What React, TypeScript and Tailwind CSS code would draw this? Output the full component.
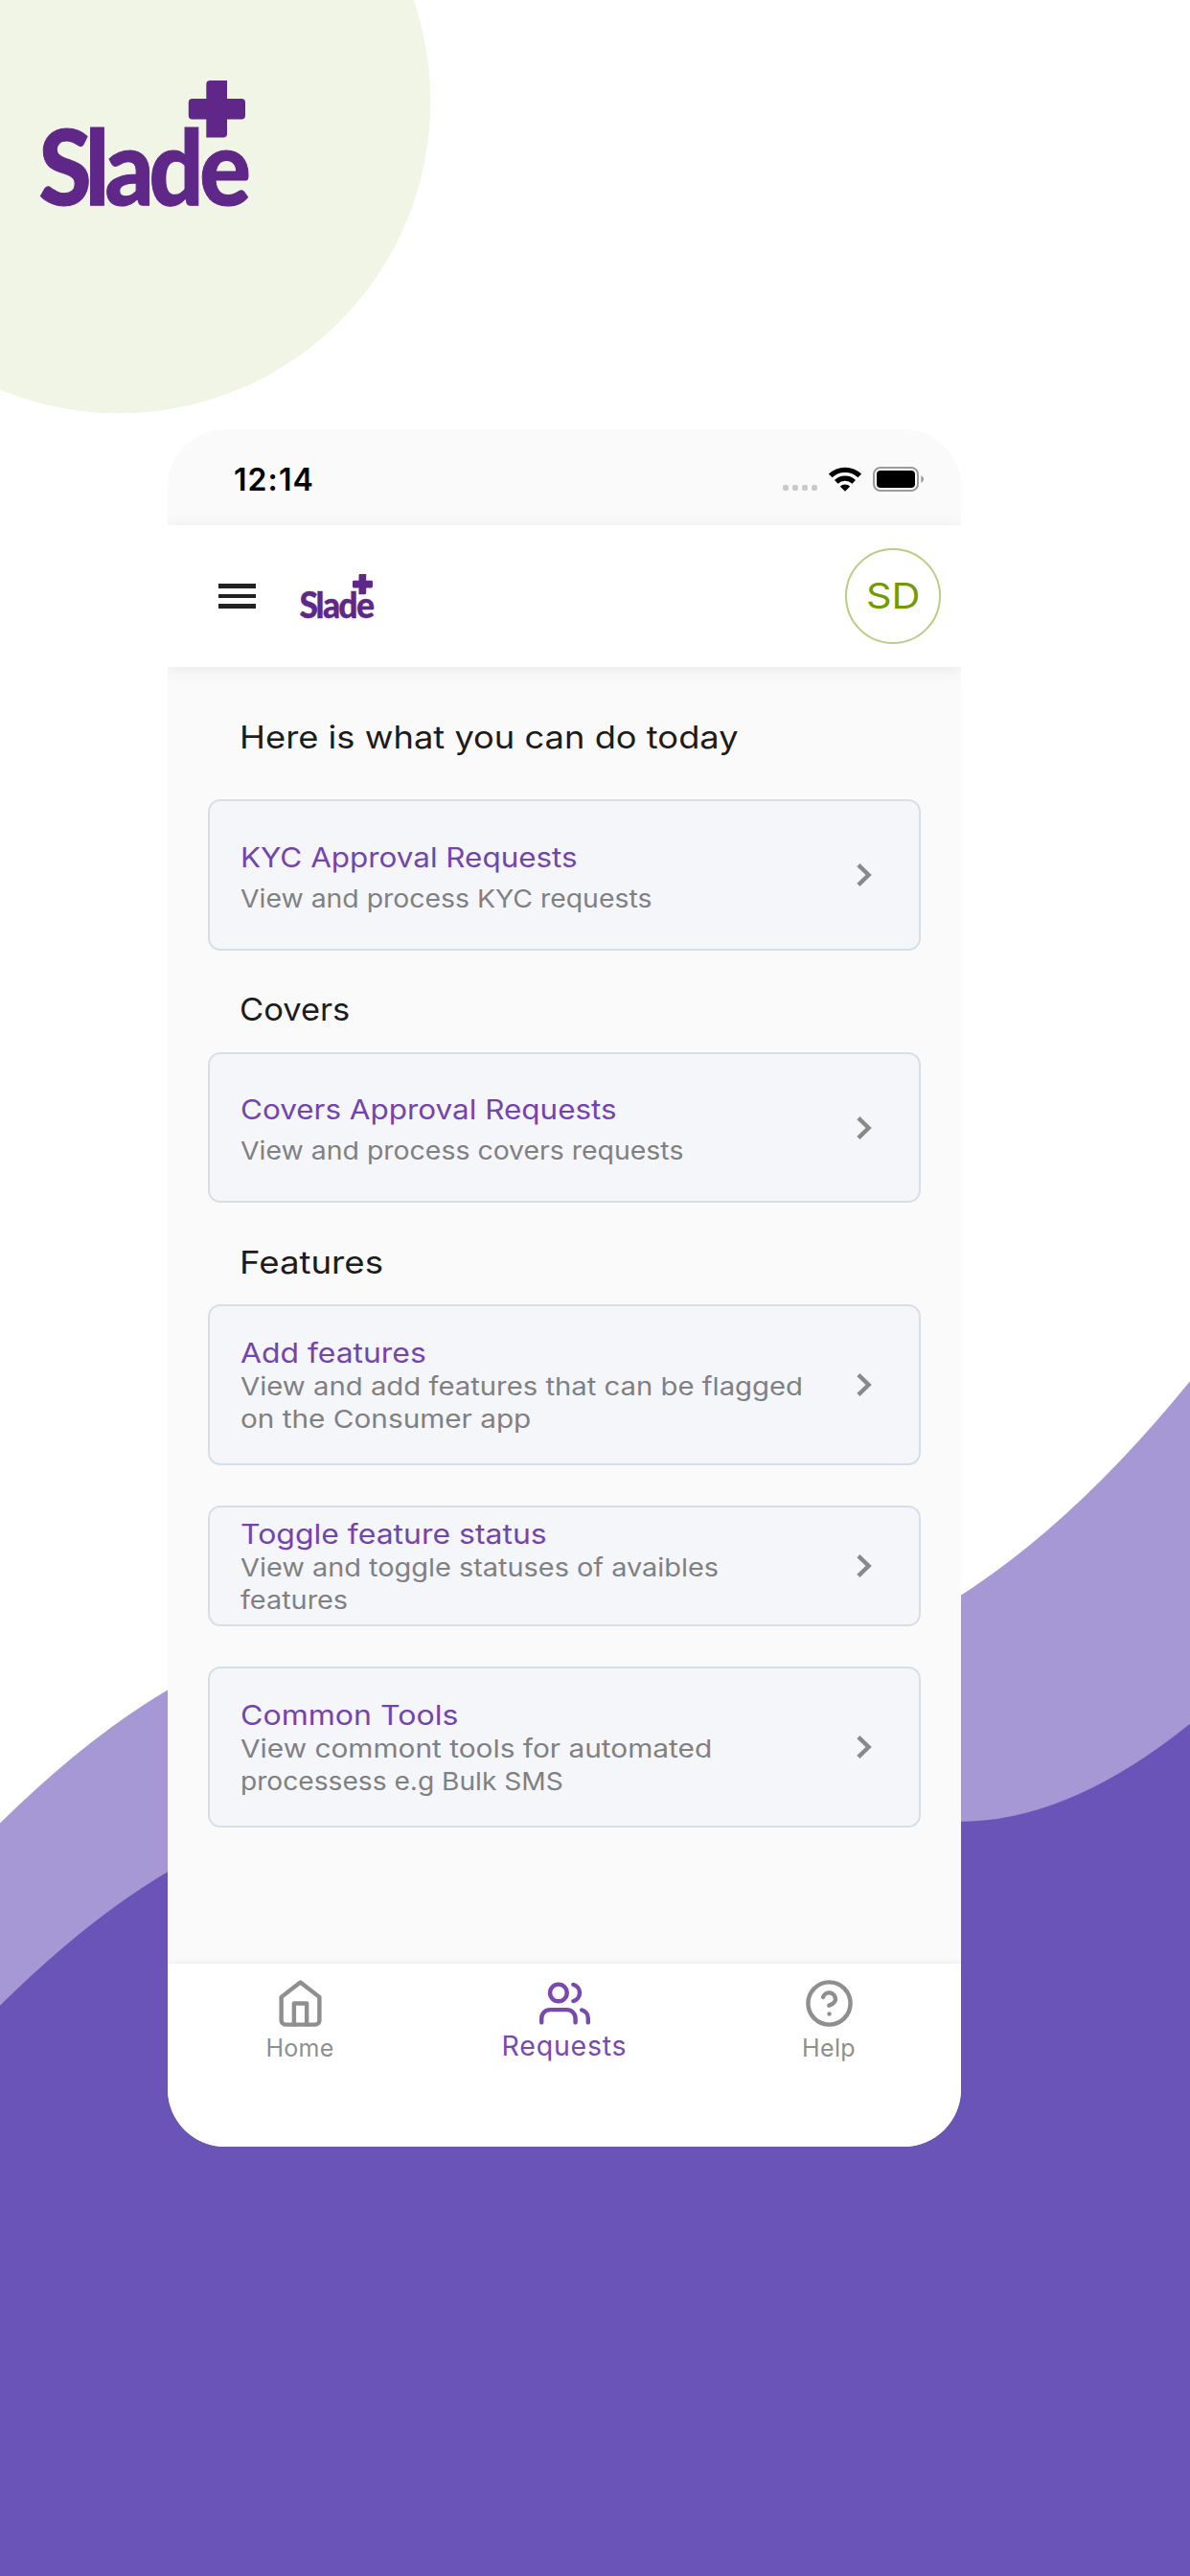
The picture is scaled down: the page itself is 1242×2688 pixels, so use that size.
import React from "react";

const cards = {
  kyc: {
    title: "KYC Approval Requests",
    titleClass: "scale-x-[1.102]",
    lines: [{ text: "View and process KYC requests", className: "scale-x-[1.091]" }],
    className: "h-[158px] pt-[42px]",
    gap: "gap-[9px]",
  },
  covers: {
    title: "Covers Approval Requests",
    titleClass: "scale-x-[1.103]",
    lines: [{ text: "View and process covers requests", className: "scale-x-[1.093]" }],
    className: "h-[157px] pt-[41px]",
    gap: "gap-[9px]",
  },
  features: {
    title: "Add features",
    titleClass: "scale-x-[1.118]",
    lines: [
      { text: "View and add features that can be flagged", className: "scale-x-[1.126]" },
      { text: "on the Consumer app", className: "scale-x-[1.144]" },
    ],
    className: "h-[168px] pt-[32px]",
    gap: "gap-px",
  },
  toggle: {
    title: "Toggle feature status",
    titleClass: "scale-x-[1.121]",
    lines: [
      { text: "View and toggle statuses of avaibles", className: "scale-x-[1.111]" },
      { text: "features", className: "scale-x-[1.11]" },
    ],
    className: "h-[126px] pt-[11px]",
    gap: "gap-px",
  },
  tools: {
    title: "Common Tools",
    titleClass: "scale-x-[1.125]",
    lines: [
      { text: "View commont tools for automated", className: "scale-x-[1.147]" },
      { text: "processess e.g Bulk SMS", className: "scale-x-[1.082]" },
    ],
    className: "h-[168px] pt-[32px]",
    gap: "gap-px",
  },
};

type CardProps = (typeof cards)["kyc"];

const Logo = ({ className }: { className: string }) => (
  <svg viewBox="0 0 217 132" className={className} fill="#5f2787" overflow="visible">
    <text
      x="-1.5 46.8 67.5 113.500 166.3"
      y="0"
      transform="translate(0 130.3) scale(1 1.08)"
      fontFamily="Lato, sans-serif"
      fontWeight="900"
      fontSize="100"
      stroke="#5f2787"
      strokeWidth="1"
    >
      Slade
    </text>
    <path d="M177.3 0H195V19H210Q214 19 214 23V36.500Q214 40.500 210 40.500H195V55.500Q195 59.500 191 59.500H173.300V40.500H158.800Q154.800 40.500 154.800 36.500V23Q154.800 19 158.800 19H173.300V4Q173.300 0 177.300 0Z" />
  </svg>
);

const Backdrop = () => (
  <svg viewBox="0 0 1242 2688" className="absolute inset-0 h-full w-full">
    <circle cx="124" cy="106" r="325.300" fill="#f1f5e5" />
    <path
      d="M0 1902.500Q91.500 1812.500 175 1763.500L600 1800L1003 1664.500Q1123 1587.700 1242 1441.300V2688H0Z"
      fill="#a598d5"
    />
    <path
      d="M0 2092.700Q91.500 2002.500 175 1953.300L600 1990L1003 1900.700Q1115.500 1900.700 1242 1798.800V2688H0Z"
      fill="#6a54b7"
    />
  </svg>
);

const StatusBar = () => (
  <div className="flex h-[100px] items-start justify-between pt-[31px] pl-[69px] pr-[38px]">
    <p className="text-[32px] leading-[43px] font-semibold tracking-[1.07px] text-black">12:14</p>
    <div className="flex items-end pt-[8px]">
      <div className="mb-[1px] flex gap-1">
        <span className="size-[6px] rounded-[2px] bg-[#c9c9c9]" />
        <span className="size-[6px] rounded-[2px] bg-[#c9c9c9]" />
        <span className="size-[6px] rounded-[2px] bg-[#c9c9c9]" />
        <span className="size-[6px] rounded-[2px] bg-[#c9c9c9]" />
      </div>
      <svg width="34" height="26" viewBox="0 0 34 26" className="ml-3" fill="none" stroke="#000" strokeWidth="5.200">
        <path d="M1.800 9.500a21.800 21.800 0 0 1 30.400 0" />
        <path d="M7.800 15.900a13.300 13.300 0 0 1 18.400 0" />
        <path d="M11.800 20.600a7.400 7.400 0 0 1 10.400 0L17 25.800Z" fill="#000" stroke="none" />
      </svg>
      <svg width="54" height="26" viewBox="0 0 54 26" className="ml-3">
        <rect x="1" y="1" width="46" height="24" rx="7" fill="#fff" stroke="#9b9b9b" strokeWidth="2" />
        <rect x="4" y="4" width="40" height="18" rx="4" fill="#000" />
        <path d="M50.300 9q2.800 1.400 2.800 4t-2.800 4Z" fill="#9b9b9b" />
      </svg>
    </div>
  </div>
);

const Header = () => (
  <header className="relative flex h-[148px] items-center bg-white pl-[53px] pr-[21px] shadow-[0_2px_16px_rgba(0,0,0,0.08)]">
    <div className="flex flex-col gap-[6px]">
      <span className="h-[4.500px] w-[38.500px] bg-[#222]" />
      <span className="h-[4.500px] w-[38.500px] bg-[#222]" />
      <span className="h-[4.500px] w-[38.500px] bg-[#222]" />
    </div>
    <Logo className="ml-[46px] h-[47px] w-[77px]" />
    <div className="ml-auto flex size-[100px] items-center justify-center rounded-full border-2 border-[#b9ce82] text-[37px] text-[#719b00]">
      <span className="scale-x-[1.12]">SD</span>
    </div>
  </header>
);

const SectionTitle = ({ className, children }: { className: string; children: string }) => (
  <h2 className={`ml-[32.5px] w-fit origin-left text-[33px] leading-[40px] font-normal text-[#1c1c1c] ${className}`}>
    {children}
  </h2>
);

const Card = ({ title, titleClass, lines, className, gap }: CardProps) => (
  <div
    className={`relative flex items-start rounded-[13px] border-2 border-[#d6dfe6] bg-[#f5f6fa] pl-[32px] text-nowrap ${className}`}
  >
    <div className={`flex flex-col ${gap}`}>
      <h3 className={`w-fit origin-left text-[28.5px] leading-[34px] font-normal text-[#7444ad] ${titleClass}`}>
        {title}
      </h3>
      <div className="text-[26px] leading-[34px] text-[#808083]">
        {lines.map((line) => (
          <p key={line.text} className={`w-fit origin-left ${line.className}`}>
            {line.text}
          </p>
        ))}
      </div>
    </div>
    <svg
      width="16"
      height="24"
      viewBox="0 0 16 24"
      className="absolute top-1/2 right-[49px] -translate-y-1/2"
      fill="none"
      stroke="#898989"
      strokeWidth="4.400"
    >
      <path d="M1.900 1.700L12.600 12L1.900 22.300" />
    </svg>
  </div>
);

const NavItem = ({
  label,
  className,
  children,
}: {
  label: string;
  className: string;
  children: React.ReactNode;
}) => (
  <div className={`flex flex-1 flex-col items-center pt-[15px] ${className}`}>
    <svg
      width="53"
      height="53"
      viewBox="0 0 24 24"
      fill="none"
      stroke="currentColor"
      strokeWidth="2"
      strokeLinecap="round"
      strokeLinejoin="round"
    >
      {children}
    </svg>
    <p>{label}</p>
  </div>
);

const BottomNav = () => (
  <nav className="relative mt-auto flex h-[191px] bg-white shadow-[0_0_8px_rgba(0,0,0,0.07)]">
    <NavItem label="Home" className="gap-[3px] text-[25px] leading-[34px] tracking-[0.2px] text-[#8f8f8f]">
      <path d="M3 9l9-7 9 7v11a2 2 0 0 1-2 2H5a2 2 0 0 1-2-2z" />
      <path d="M9 22V12h6v10" />
    </NavItem>
    <NavItem label="Requests" className="gap-0 text-[28.5px] leading-[35px] tracking-[0.78px] text-[#7949af]">
      <path d="M17 21v-2a4 4 0 0 0-4-4H5a4 4 0 0 0-4 4v2" />
      <circle cx="9" cy="7" r="4" />
      <path d="M23 21v-2a4 4 0 0 0-3-3.870" />
      <path d="M16 3.130a4 4 0 0 1 0 7.750" />
    </NavItem>
    <NavItem label="Help" className="gap-[3px] text-[25px] leading-[34px] tracking-[0.4px] text-[#8f8f8f]">
      <circle cx="12" cy="12" r="10" />
      <path d="M9.090 9a3 3 0 0 1 5.830 1c0 2-3 3-3 3" />
      <path d="M12 17h.01" />
    </NavItem>
  </nav>
);

export default function App() {
  return (
    <div className="relative h-[2688px] w-[1242px] overflow-hidden bg-white font-['Inter',sans-serif]">
      <Backdrop />
      <div className="relative pt-[84px] pl-[42px]">
        <Logo className="h-[132px] w-[217px]" />
      </div>
      <div className="relative mt-[232px] ml-[175px] flex h-[1792px] w-[828px] flex-col overflow-hidden rounded-[60px] bg-[#fafafa]">
        <StatusBar />
        <Header />
        <main className="px-[42px]">
          <SectionTitle className="mt-[53px] mb-[45px] scale-x-[1.1]">Here is what you can do today</SectionTitle>
          <Card {...cards.kyc} />
          <SectionTitle className="mt-[41px] mb-[25px] scale-x-[1.045]">Covers</SectionTitle>
          <Card {...cards.covers} />
          <SectionTitle className="mt-[42px] mb-[24px] scale-x-[1.11]">Features</SectionTitle>
          <div className="flex flex-col gap-[42px]">
            <Card {...cards.features} />
            <Card {...cards.toggle} />
            <Card {...cards.tools} />
          </div>
        </main>
        <BottomNav />
      </div>
    </div>
  );
}
